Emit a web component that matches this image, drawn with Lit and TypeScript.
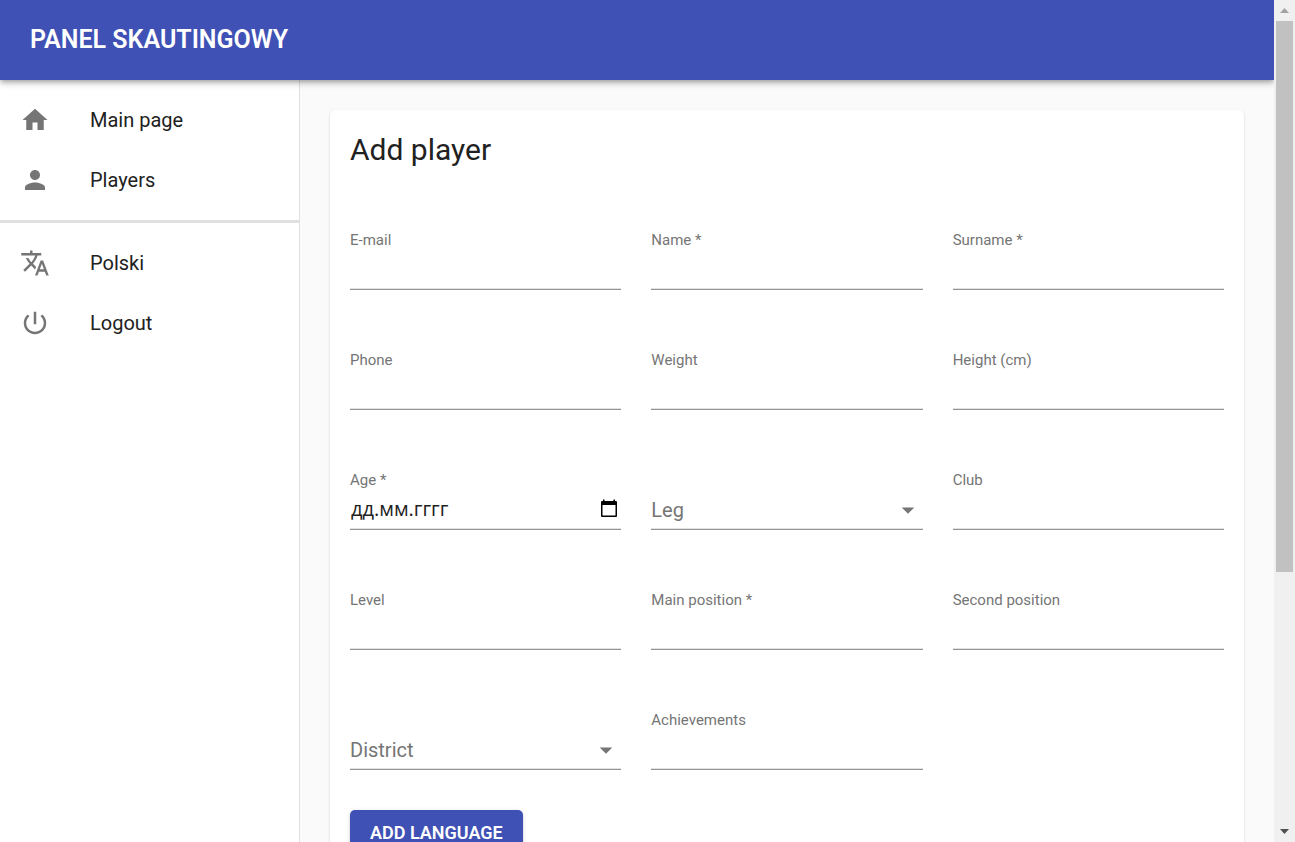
import { LitElement, html, css, svg } from "lit";
import { customElement, property } from "lit/decorators.js";

const ICONS = {
  home: svg`<path d="M10 20v-6h4v6h5v-8h3L12 3 2 12h3v8z"/>`,
  person: svg`<path d="M12 12c2.21 0 4-1.79 4-4s-1.79-4-4-4-4 1.79-4 4 1.79 4 4 4zm0 2c-2.67 0-8 1.34-8 4v2h16v-2c0-2.66-5.33-4-8-4z"/>`,
  translate: svg`<path d="M12.87 15.07l-2.54-2.51.03-.03c1.74-1.94 2.98-4.17 3.71-6.53H17V4h-7V2H8v2H1v1.99h11.17C11.5 7.92 10.44 9.75 9 11.35 8.07 10.32 7.3 9.19 6.69 8h-2c.73 1.63 1.73 3.17 2.98 4.56l-5.09 5.02L4 19l5-5 3.11 3.11.76-2.04zM18.5 10h-2L12 22h2l1.12-3h4.75L21 22h2l-4.5-12zm-2.62 7l1.62-4.33L19.12 17h-3.24z"/>`,
  power: svg`<path d="M13 3h-2v10h2V3zm4.83 2.17l-1.42 1.42C17.99 7.86 19 9.81 19 12c0 3.87-3.13 7-7 7s-7-3.13-7-7c0-2.19 1.01-4.14 2.58-5.42L6.17 5.17C4.23 6.82 3 9.26 3 12c0 4.97 4.03 9 9 9s9-4.03 9-9c0-2.74-1.23-5.18-3.17-6.83z"/>`,
  dropdown: svg`<path d="M7 10l5 5 5-5z"/>`,
};

type IconName = keyof typeof ICONS;

interface NavItem {
  icon: IconName;
  text: string;
}

interface FieldSpec {
  id: string;
  label: string;
  kind?: "text" | "date" | "select";
  required?: boolean;
}

const PAGES: NavItem[] = [
  { icon: "home", text: "Main page" },
  { icon: "person", text: "Players" },
];

const ACTIONS: NavItem[] = [
  { icon: "translate", text: "Polski" },
  { icon: "power", text: "Logout" },
];

const FIELDS: FieldSpec[] = [
  { id: "email", label: "E-mail" },
  { id: "name", label: "Name", required: true },
  { id: "surname", label: "Surname", required: true },
  { id: "phone", label: "Phone" },
  { id: "weight", label: "Weight" },
  { id: "height", label: "Height (cm)" },
  { id: "age", label: "Age", kind: "date", required: true },
  { id: "leg", label: "Leg", kind: "select" },
  { id: "club", label: "Club" },
  { id: "level", label: "Level" },
  { id: "main-position", label: "Main position", required: true },
  { id: "second-position", label: "Second position" },
  { id: "district", label: "District", kind: "select" },
  { id: "achievements", label: "Achievements" },
];

@customElement("form-field")
class FormField extends LitElement {
  @property({ attribute: false }) spec!: FieldSpec;

  static styles = css`
    :host {
      display: block;
    }
    .field {
      display: grid;
      grid-template-rows: 20px 40px;
      grid-template-columns: minmax(0, 1fr) auto;
      border-bottom: 1px solid #949494;
      box-shadow: inset 0 -1px #e2e2e2;
      box-sizing: border-box;
      height: 60px;
    }
    .label {
      grid-area: 1 / 1 / 2 / 3;
      font-size: 15px;
      line-height: 20px;
      color: #757575;
    }
    .label.resting {
      grid-area: 2 / 1;
      font-size: 20px;
      line-height: 40px;
      pointer-events: none;
    }
    .control {
      grid-area: 2 / 1;
      width: 100%;
      min-width: 0;
      box-sizing: border-box;
      border: 0;
      padding: 0;
      margin: 0;
      background: none;
      outline: none;
      font: inherit;
      font-size: 20px;
      color: #212121;
      appearance: none;
    }
    .control.wide {
      grid-area: 2 / 1 / 3 / 3;
    }
    .control.date {
      font-family: "Open Sans", "Noto Sans", sans-serif;
      padding: 0 1px 4px;
    }
    .control.date::placeholder {
      color: #212121;
      opacity: 1;
    }
    .picker {
      grid-area: 2 / 2;
      align-self: center;
      border: 0;
      padding: 0 2px 2px;
      background: none;
      line-height: 0;
    }
    .calendar {
      width: 20px;
      height: 20px;
    }
    .arrow {
      grid-area: 2 / 2;
      align-self: center;
      width: 30px;
      height: 30px;
      fill: #757575;
      pointer-events: none;
    }
  `;

  render() {
    const { id, label, kind = "text", required = false } = this.spec;
    const text = required ? `${label} *` : label;
    if (kind === "select") {
      return html`<div class="field">
        <select class="control wide" id=${id}><option value=""></option></select>
        <label class="label resting" for=${id}>${text}</label>
        <svg class="arrow" viewBox="0 0 24 24" aria-hidden="true">${ICONS.dropdown}</svg>
      </div>`;
    }
    if (kind === "date") {
      return html`<div class="field">
        <label class="label" for=${id}>${text}</label>
        <input class="control date" id=${id} type="text" placeholder="дд.мм.гггг" ?required=${required} />
        <button class="picker" type="button" aria-label="Calendar">
          <svg class="calendar" viewBox="0 0 20 20" aria-hidden="true">
            <path d="M3 2h14a1 1 0 0 1 1 1v14a1 1 0 0 1-1 1H3a1 1 0 0 1-1-1V3a1 1 0 0 1 1-1zM3.500 6v10.500h13V6zM4 0.500h1.500V2H4zM14.500 0.500H16V2h-1.500z" fill="#000" fill-rule="evenodd" />
          </svg>
        </button>
      </div>`;
    }
    return html`<div class="field">
      <label class="label" for=${id}>${text}</label>
      <input class="control wide" id=${id} type="text" ?required=${required} />
    </div>`;
  }
}

@customElement("app-root")
class AppRoot extends LitElement {
  static styles = css`
    :host {
      display: grid;
      grid-template-columns: minmax(0, 1fr) 21px;
      height: 100vh;
      overflow: hidden;
      font-family: Roboto, sans-serif;
      font-size: 20px;
      color: #212121;
      background: #fafafa;
    }
    .page {
      display: grid;
      grid-template-rows: auto minmax(0, 1fr);
      grid-template-columns: 300px minmax(0, 1fr);
      min-height: 0;
      overflow: hidden;
    }
    .bar {
      grid-column: 1 / 3;
      z-index: 1;
      display: flex;
      align-items: center;
      height: 80px;
      padding: 0 30px;
      box-sizing: border-box;
      background: #3f51b5;
      color: #fff;
      box-shadow: 0 2px 4px -1px rgba(0, 0, 0, 0.2), 0 4px 5px rgba(0, 0, 0, 0.14),
        0 1px 10px rgba(0, 0, 0, 0.12);
    }
    .brand {
      margin: 0;
      font-size: 25px;
      font-weight: 600;
      line-height: 42px;
    }
    .side {
      background: #fff;
      border-right: 1px solid #e0e0e0;
    }
    .list {
      list-style: none;
      margin: 0;
      padding: 10px 0;
    }
    .list + .list {
      border-top: 3px solid #e0e0e0;
    }
    .item {
      display: flex;
      align-items: center;
      gap: 40px;
      height: 60px;
      padding: 0 20px;
      color: inherit;
      text-decoration: none;
    }
    .icon {
      width: 30px;
      height: 30px;
      fill: #757575;
    }
    .main {
      padding: 30px;
      min-height: 0;
    }
    .card {
      padding: 20px;
      background: #fff;
      border-radius: 5px;
      box-shadow: 0 2px 1px -1px rgba(0, 0, 0, 0.2), 0 1px 1px rgba(0, 0, 0, 0.14),
        0 1px 3px rgba(0, 0, 0, 0.12);
    }
    .title {
      margin: 0 0 60px;
      font-size: 30px;
      font-weight: 400;
      line-height: 40px;
    }
    .fields {
      display: grid;
      grid-template-columns: repeat(3, minmax(0, 1fr));
      gap: 60px 30px;
      margin-bottom: 40px;
    }
    .action {
      height: 45px;
      padding: 0 20px;
      border: 0;
      border-radius: 5px;
      background: #3f51b5;
      color: #fff;
      font: inherit;
      font-size: 18px;
      font-weight: 600;
      box-shadow: 0 3px 1px -2px rgba(0, 0, 0, 0.2), 0 2px 2px rgba(0, 0, 0, 0.14),
        0 1px 5px rgba(0, 0, 0, 0.12);
    }
    .scroll {
      display: grid;
      grid-template-rows: 21px 551fr 249fr 21px;
      justify-items: center;
      align-items: center;
      background: #f0f0f0;
    }
    .thumb {
      grid-row: 2;
      width: 17px;
      height: 100%;
      background: #c1c1c1;
    }
    .up,
    .down {
      width: 9px;
      height: 5px;
      fill: #a3a3a3;
    }
    .down {
      grid-row: 4;
      fill: #505050;
    }
  `;

  private renderList(items: NavItem[]) {
    return html`<ul class="list">
      ${items.map(
        (item) => html`<li>
          <a class="item" href="#">
            <svg class="icon" viewBox="0 0 24 24" aria-hidden="true">${ICONS[item.icon]}</svg>
            <span>${item.text}</span>
          </a>
        </li>`
      )}
    </ul>`;
  }

  render() {
    return html`
      <div class="page">
        <header class="bar"><h1 class="brand">PANEL SKAUTINGOWY</h1></header>
        <nav class="side">${this.renderList(PAGES)}${this.renderList(ACTIONS)}</nav>
        <main class="main">
          <form class="card">
            <h2 class="title">Add player</h2>
            <div class="fields">
              ${FIELDS.map((spec) => html`<form-field .spec=${spec}></form-field>`)}
            </div>
            <button class="action" type="button">ADD LANGUAGE</button>
          </form>
        </main>
      </div>
      <div class="scroll" aria-hidden="true">
        <svg class="up" viewBox="0 0 9 5"><path d="M0 5L4.500 0 9 5z" /></svg>
        <div class="thumb"></div>
        <svg class="down" viewBox="0 0 9 5"><path d="M0 0L4.500 5 9 0z" /></svg>
      </div>
    `;
  }
}
